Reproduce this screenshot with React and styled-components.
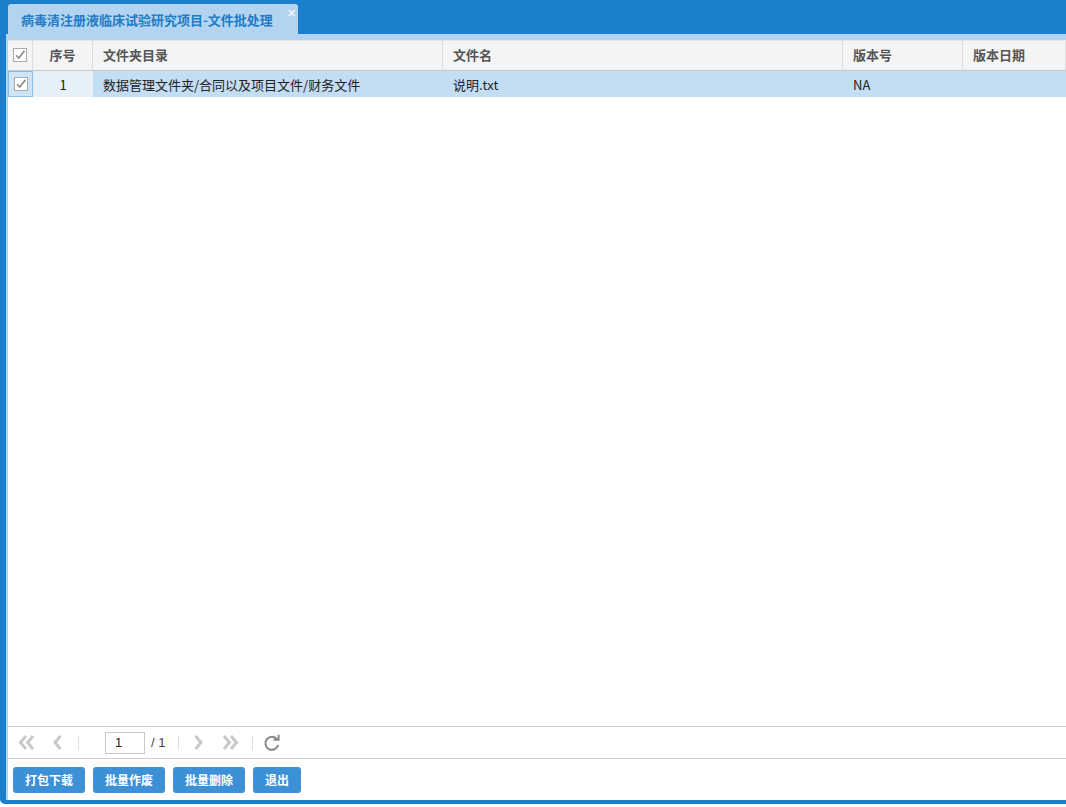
import React from "react";
import styled, { createGlobalStyle } from "styled-components";

const Global = createGlobalStyle`
  html, body { margin: 0; padding: 0; background: #fff; }
  body { font-family: "Noto Sans CJK SC", "Liberation Sans", sans-serif; font-size: 12px; color: #333; }
  #root { width: 1066px; height: 807px; overflow: hidden; }
`;

const Frame = styled.div`
  height: 804px;
  background: #1a7fcc;
  padding-left: 6px;
  padding-bottom: 4px;
  box-sizing: border-box;
  border-bottom-left-radius: 5px;
  display: flex;
  flex-direction: column;
`;

const TabBar = styled.div`
  height: 34px;
  flex: none;
  display: flex;
  align-items: flex-end;
  padding-left: 2px;
`;

const Tab = styled.div`
  position: relative;
  height: 30px;
  width: 290px;
  box-sizing: border-box;
  background: #b3d4f0;
  border-radius: 3px 3px 0 0;
  color: #1f7bc6;
  font-weight: bold;
  font-size: 13px;
  display: flex;
  align-items: center;
  padding-left: 13px;
`;

const Close = styled.span`
  position: absolute;
  right: 2px;
  top: 0px;
  color: #fff;
  font-size: 15px;
  font-family: "Liberation Sans", sans-serif;
  font-weight: normal;
`;

const Panel = styled.div`
  flex: 1;
  background: #fff;
  border-left: 2px solid #b3d4f0;
  display: flex;
  flex-direction: column;
  min-height: 0;
`;

const Strip = styled.div`
  height: 6px;
  background: #b3d4f0;
  flex: none;
`;

const Grid = styled.div`
  display: grid;
  grid-template-columns: 25px 60px 350px 400px 120px 1fr;
  flex: none;
`;

const HeadCell = styled.div`
  height: 31px;
  box-sizing: border-box;
  background: #f5f4f4;
  border-right: 1px solid #dcdcdc;
  border-bottom: 1px solid #c8c8c8;
  border-top: 1px solid #e4e4e4;
  display: flex;
  align-items: center;
  justify-content: ${(p) => (p.$center ? "center" : "flex-start")};
  padding-left: ${(p) => (p.$center ? "0" : "10px")};
  padding-bottom: 2px;
  font-weight: bold;
  font-size: 13px;
  color: #555;
`;

const Cell = styled.div`
  height: 26px;
  box-sizing: border-box;
  background: #c3ddf3;
  display: flex;
  align-items: center;
  justify-content: ${(p) => (p.$center ? "center" : "flex-start")};
  padding-left: ${(p) => (p.$center ? "0" : "10px")};
  font-size: 13px;
  color: #222;
`;

const CheckCell = styled(Cell)`
  border: 1px solid #8fbce3;
  background: #cfe4f6;
`;

const NumCell = styled(Cell)`
  background: #e6f0f9;
`;

const Spacer = styled.div`
  flex: 1;
`;

const Pager = styled.div`
  height: 33px;
  flex: none;
  border-top: 1px solid #cfcfcf;
  border-bottom: 1px solid #cfcfcf;
  box-sizing: border-box;
  display: flex;
  align-items: center;
  padding-left: 4px;
`;

const PageBtn = styled.span`
  width: ${(p) => p.$w || 28}px;
  flex: none;
  display: inline-flex;
  align-items: center;
  justify-content: center;
`;

const Sep = styled.span`
  width: 1px;
  height: 14px;
  flex: none;
  background: #ddd;
  margin-left: ${(p) => p.$l || 0}px;
  margin-right: ${(p) => p.$r || 0}px;
`;

const PageInput = styled.div`
  width: 40px;
  height: 22px;
  flex: none;
  box-sizing: border-box;
  border: 1px solid #c9c9c9;
  display: flex;
  align-items: center;
  padding-left: 9px;
  font-family: "Liberation Sans", sans-serif;
  font-size: 13px;
  color: #222;
`;

const PageTotal = styled.span`
  font-family: "Liberation Sans", sans-serif;
  font-size: 13px;
  color: #444;
  margin-left: 6px;
  width: 20px;
`;

const ButtonBar = styled.div`
  flex: 1;
  max-height: 41px;
  display: flex;
  align-items: center;
  gap: 8px;
  padding-left: 5px;
`;

const Button = styled.button`
  height: 26px;
  padding: 0 12px;
  border: none;
  border-radius: 3px;
  background: #3c90d6;
  color: #fff;
  font-family: "Noto Sans CJK SC", sans-serif;
  font-weight: bold;
  font-size: 12px;
  cursor: pointer;
`;

const CheckIcon = ({ color = "#888" }) => (
  <svg width="14" height="14" viewBox="0 0 14 14">
    <rect x="0.5" y="0.5" width="13" height="13" fill="#fff" stroke="#aaa" />
    <path d="M3 7.2 L5.8 10 L11.5 2.8" fill="none" stroke={color} strokeWidth="1.6" />
  </svg>
);

const DoubleLeft = () => (
  <svg width="17" height="15" viewBox="0 0 17 15">
    <path d="M8 1 L2.5 7.5 L8 14 M15 1 L9.5 7.5 L15 14" fill="none" stroke="#c8c8c8" strokeWidth="3" />
  </svg>
);
const Left = () => (
  <svg width="11" height="15" viewBox="0 0 11 15">
    <path d="M8.5 1 L3 7.5 L8.5 14" fill="none" stroke="#c8c8c8" strokeWidth="3" />
  </svg>
);
const Right = () => (
  <svg width="11" height="15" viewBox="0 0 11 15">
    <path d="M2.5 1 L8 7.5 L2.5 14" fill="none" stroke="#c8c8c8" strokeWidth="3" />
  </svg>
);
const DoubleRight = () => (
  <svg width="17" height="15" viewBox="0 0 17 15">
    <path d="M2 1 L7.5 7.5 L2 14 M9 1 L14.5 7.5 L9 14" fill="none" stroke="#c8c8c8" strokeWidth="3" />
  </svg>
);
const Refresh = () => (
  <svg width="18" height="18" viewBox="0 0 18 18">
    <path d="M14.2 5.5 A6.5 6.5 0 1 0 15.2 11" fill="none" stroke="#888" strokeWidth="2" />
    <path d="M10.5 5.8 L15.6 5.8 L15.6 0.8" fill="none" stroke="#888" strokeWidth="2" />
  </svg>
);

const headers = ["序号", "文件夹目录", "文件名", "版本号", "版本日期"];

export default function App() {
  return (
    <>
      <Global />
      <Frame>
        <TabBar>
          <Tab>
            病毒清注册液临床试验研究项目-文件批处理
            <Close>×</Close>
          </Tab>
        </TabBar>
        <Panel>
          <Strip />
          <Grid>
            <HeadCell $center>
              <CheckIcon />
            </HeadCell>
            {headers.map((h, i) => (
              <HeadCell key={h} $center={i === 0}>
                {h}
              </HeadCell>
            ))}
            <CheckCell $center>
              <CheckIcon />
            </CheckCell>
            <NumCell $center>1</NumCell>
            <Cell>数据管理文件夹/合同以及项目文件/财务文件</Cell>
            <Cell>说明.txt</Cell>
            <Cell>NA</Cell>
            <Cell />
          </Grid>
          <Spacer />
          <Pager>
            <PageBtn $w={28}>
              <DoubleLeft />
            </PageBtn>
            <PageBtn $w={34}>
              <Left />
            </PageBtn>
            <Sep $l={4} $r={26} />
            <PageInput>1</PageInput>
            <PageTotal>/ 1</PageTotal>
            <Sep $l={7} />
            <PageBtn $w={38}>
              <Right />
            </PageBtn>
            <PageBtn $w={26}>
              <DoubleRight />
            </PageBtn>
            <Sep $l={9} />
            <PageBtn $w={38}>
              <Refresh />
            </PageBtn>
          </Pager>
          <ButtonBar>
            <Button>打包下载</Button>
            <Button>批量作废</Button>
            <Button>批量删除</Button>
            <Button>退出</Button>
          </ButtonBar>
        </Panel>
      </Frame>
    </>
  );
}
